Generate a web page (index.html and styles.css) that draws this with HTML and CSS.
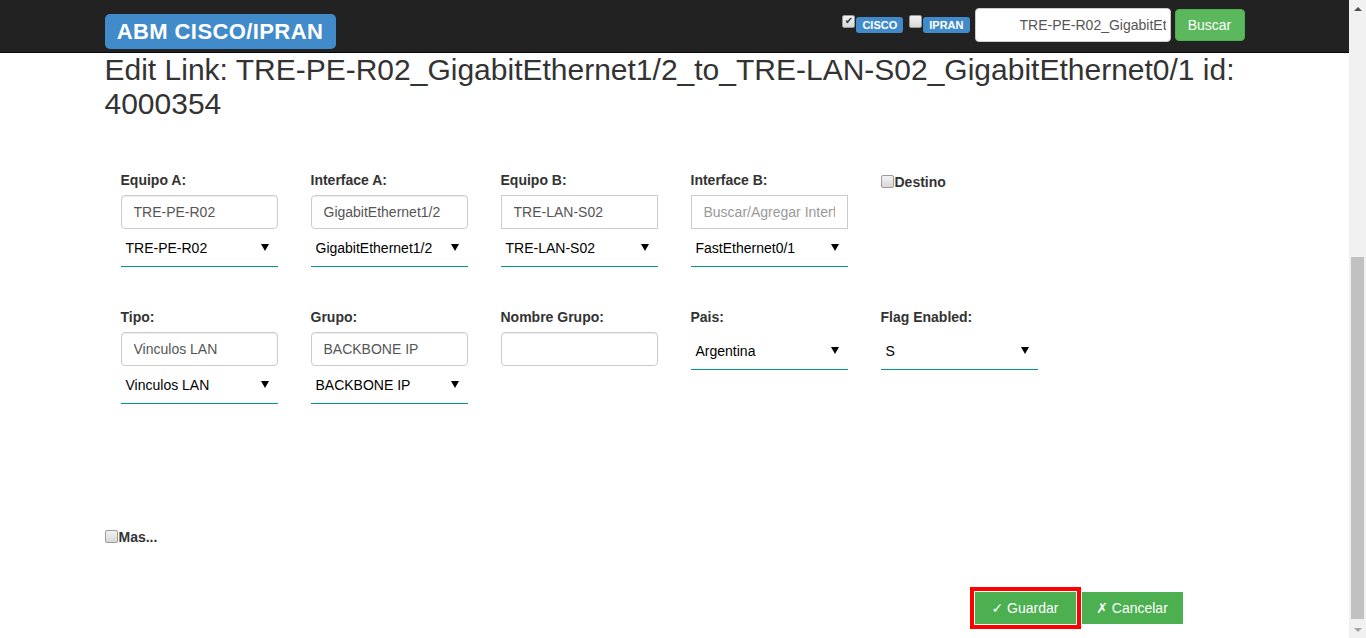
FILE: index.html
```html
<!DOCTYPE html>
<html lang="es">
<head>
<meta charset="utf-8">
<title>Edit Link</title>
<link rel="stylesheet" href="styles.css">
</head>
<body>
<div class="page">
  <nav class="navbar">
    <div class="nav-inner">
      <div class="brand">ABM CISCO/IPRAN</div>
      <div class="nav-right">
        <input type="checkbox" class="chk nav-check" checked>
        <span class="badge">CISCO</span>
        <input type="checkbox" class="chk nav-check nav-check-2">
        <span class="badge">IPRAN</span>
        <input type="text" class="nav-search" value="TRE-PE-R02_GigabitEthernet1/2_to_TRE-LAN-S02_GigabitEthernet0/1">
        <button class="btn-buscar">Buscar</button>
      </div>
    </div>
  </nav>
  <main class="container">
    <h1 class="title">Edit Link: TRE-PE-R02_GigabitEthernet1/2_to_TRE-LAN-S02_GigabitEthernet0/1 id: 4000354</h1>
    <div class="form-grid">
      <div class="field">
        <label class="lbl">Equipo A:</label>
        <input class="inp" type="text" value="TRE-PE-R02">
        <div class="sel"><span>TRE-PE-R02</span><svg class="arrow" width="8" height="7" viewBox="0 0 8 7"><path d="M0 0H8L4 7Z"/></svg></div>
      </div>
      <div class="field">
        <label class="lbl">Interface A:</label>
        <input class="inp" type="text" value="GigabitEthernet1/2">
        <div class="sel"><span>GigabitEthernet1/2</span><svg class="arrow" width="8" height="7" viewBox="0 0 8 7"><path d="M0 0H8L4 7Z"/></svg></div>
      </div>
      <div class="field">
        <label class="lbl">Equipo B:</label>
        <input class="inp inp-square" type="text" value="TRE-LAN-S02">
        <div class="sel"><span>TRE-LAN-S02</span><svg class="arrow" width="8" height="7" viewBox="0 0 8 7"><path d="M0 0H8L4 7Z"/></svg></div>
      </div>
      <div class="field">
        <label class="lbl">Interface B:</label>
        <input class="inp inp-square" type="text" placeholder="Buscar/Agregar Interface">
        <div class="sel"><span>FastEthernet0/1</span><svg class="arrow" width="8" height="7" viewBox="0 0 8 7"><path d="M0 0H8L4 7Z"/></svg></div>
      </div>
      <div class="field field-check">
        <label class="chk-label"><input type="checkbox" class="chk">Destino</label>
      </div>

      <div class="field">
        <label class="lbl">Tipo:</label>
        <input class="inp" type="text" value="Vinculos LAN">
        <div class="sel"><span>Vinculos LAN</span><svg class="arrow" width="8" height="7" viewBox="0 0 8 7"><path d="M0 0H8L4 7Z"/></svg></div>
      </div>
      <div class="field">
        <label class="lbl">Grupo:</label>
        <input class="inp" type="text" value="BACKBONE IP">
        <div class="sel"><span>BACKBONE IP</span><svg class="arrow" width="8" height="7" viewBox="0 0 8 7"><path d="M0 0H8L4 7Z"/></svg></div>
      </div>
      <div class="field">
        <label class="lbl">Nombre Grupo:</label>
        <input class="inp" type="text" value="">
      </div>
      <div class="field">
        <label class="lbl">Pais:</label>
        <div class="sel sel-alone"><span>Argentina</span><svg class="arrow" width="8" height="7" viewBox="0 0 8 7"><path d="M0 0H8L4 7Z"/></svg></div>
      </div>
      <div class="field">
        <label class="lbl">Flag Enabled:</label>
        <div class="sel sel-alone"><span>S</span><svg class="arrow" width="8" height="7" viewBox="0 0 8 7"><path d="M0 0H8L4 7Z"/></svg></div>
      </div>
    </div>

    <div class="mas">
      <label class="chk-label"><input type="checkbox" class="chk">Mas...</label>
    </div>

    <div class="actions">
      <button class="btn btn-guardar">&#10003; Guardar</button>
      <button class="btn">&#10007; Cancelar</button>
    </div>
  </main>
</div>
<div class="scrollbar">
  <div class="sb-arrow sb-up"></div>
  <div class="sb-track"><div class="sb-thumb"></div></div>
  <div class="sb-arrow sb-down"></div>
</div>
</body>
</html>
```

FILE: styles.css
```css
* { box-sizing: border-box; }

html, body {
  margin: 0;
  height: 638px;
  overflow: hidden;
}

body {
  display: flex;
  font-family: "Liberation Sans", Arial, sans-serif;
  font-size: 14px;
  color: #333;
  background: #fff;
}

.page {
  flex: 1;
  min-width: 0;
}

/* Navbar */
.navbar {
  height: 53px;
  background: #222;
  border-bottom: 1px solid #080808;
}

.nav-inner {
  width: 1140px;
  margin: 0 auto;
  display: flex;
  justify-content: space-between;
  align-items: flex-start;
}

.brand {
  margin-top: 14px;
  height: 35px;
  width: 231px;
  background: #428bca;
  color: #fff;
  border-radius: 5px;
  font-weight: bold;
  font-size: 22px;
  letter-spacing: 0.4px;
  line-height: 35px;
  text-align: center;
}

.nav-right {
  margin-top: 8px;
  height: 34px;
  display: flex;
  align-items: center;
}

/* Checkboxes (classic look) */
.chk {
  appearance: none;
  -webkit-appearance: none;
  width: 13px;
  height: 13px;
  margin: 0 1px 2px 0;
  border: 1px solid #9a9a9a;
  border-radius: 2px;
  background: linear-gradient(#f2f2f2, #d8d8d8);
  display: inline-flex;
  align-items: center;
  justify-content: center;
  flex: none;
}

.chk:checked::after {
  content: "\2714";
  font-family: "DejaVu Sans", sans-serif;
  font-size: 10px;
  line-height: 10px;
  color: #333;
}

.nav-check {
  margin: 0 1px 8px 0;
}

.nav-check-2 {
  margin-left: 6px;
}

.badge {
  display: inline-block;
  background: #428bca;
  color: #fff;
  font-weight: bold;
  font-size: 11px;
  height: 16px;
  line-height: 16px;
  padding: 0 6px;
  border-radius: 3px;
}

.nav-search {
  margin-left: 5px;
  width: 196px;
  height: 34px;
  border: 1px solid #ccc;
  border-radius: 4px;
  padding: 6px 4px 6px 44px;
  font-family: "Liberation Sans", Arial, sans-serif;
  font-size: 14px;
  color: #555;
  background: #fff;
  outline: none;
}

.btn-buscar {
  margin-left: 4px;
  width: 70px;
  height: 32px;
  border: 1px solid #4cae4c;
  border-radius: 4px;
  background: #5cb85c;
  color: #fff;
  font-family: "Liberation Sans", Arial, sans-serif;
  font-size: 14px;
  padding: 0;
}

/* Content */
.container {
  width: 1140px;
  margin: 0 auto;
}

.title {
  margin: 0;
  font-size: 30px;
  line-height: 34px;
  font-weight: normal;
  color: #333;
}

.form-grid {
  margin-top: 49px;
  padding-left: 16px;
  display: grid;
  grid-template-columns: repeat(5, 156px);
  column-gap: 34px;
  row-gap: 40px;
}

.field {
  display: flex;
  flex-direction: column;
}

.lbl {
  display: block;
  font-weight: bold;
  line-height: 20px;
  height: 20px;
  margin-bottom: 5px;
}

.inp {
  width: 157px;
  height: 34px;
  border: 1px solid #ccc;
  border-radius: 4px;
  padding: 6px 12px;
  font-family: "Liberation Sans", Arial, sans-serif;
  font-size: 14px;
  color: #555;
  background: #fff;
  box-shadow: inset 0 1px 1px rgba(0,0,0,0.075);
  outline: none;
}

.inp-square {
  border-radius: 0;
  box-shadow: none;
}

.inp::placeholder {
  color: #999;
}

.sel {
  margin-top: 6px;
  width: 157px;
  height: 32px;
  border-bottom: 1px solid #009688;
  display: flex;
  align-items: center;
  justify-content: space-between;
  padding: 0 9px 6px 5px;
  color: #000;
  font-size: 14px;
}

.sel-alone {
  margin-top: 6px;
}

.arrow {
  fill: #000;
  display: block;
}

.field-check {
  padding-top: 2px;
}

.chk-label {
  display: flex;
  align-items: center;
  font-weight: bold;
  line-height: 20px;
  color: #333;
}

.mas {
  margin-top: 123px;
}

.actions {
  margin-top: 45px;
  display: flex;
  justify-content: flex-end;
  gap: 6px;
  padding-right: 62px;
}

.btn {
  width: 101px;
  height: 32px;
  border: none;
  border-radius: 0;
  background: #4caf50;
  color: #fff;
  font-family: "Liberation Sans", "DejaVu Sans", Arial, sans-serif;
  font-size: 14px;
  padding: 0;
}

.btn-guardar {
  outline: 4px solid #f00;
  outline-offset: 1px;
}

/* Fake scrollbar */
.scrollbar {
  width: 17px;
  height: 638px;
  background: #f1f1f1;
  display: flex;
  flex-direction: column;
}

.sb-arrow {
  height: 17px;
  display: flex;
  justify-content: center;
  align-items: center;
}

.sb-up::before {
  content: "";
  border-left: 4px solid transparent;
  border-right: 4px solid transparent;
  border-bottom: 4px solid #505050;
}

.sb-down::before {
  content: "";
  border-left: 4px solid transparent;
  border-right: 4px solid transparent;
  border-top: 4px solid #a3a3a3;
}

.sb-track {
  flex: 1;
  display: flex;
  flex-direction: column;
  justify-content: flex-end;
  padding: 0 2px 2px;
}

.sb-thumb {
  height: 362px;
  background: #c1c1c1;
}
```
